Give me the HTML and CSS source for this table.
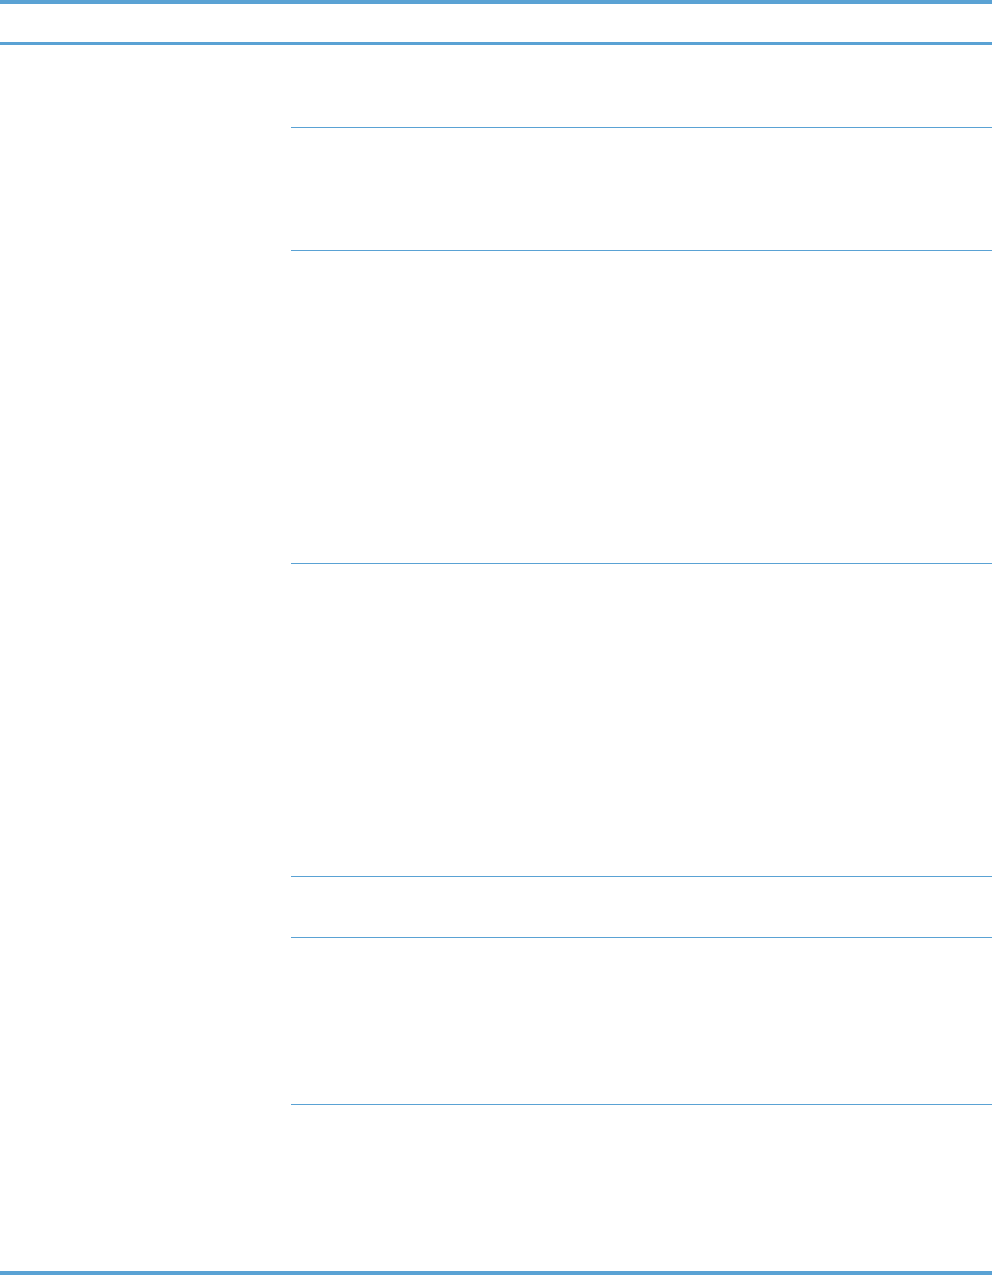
FILE: index.html
```html
<!DOCTYPE html>
<html lang="en">

<head>
  <meta charset="UTF-8">
  <meta name="viewport" content="width=device-width, initial-scale=1.0">
  <title>Table</title>
  <link rel="stylesheet" href="styles.css">
</head>

<body>
  <div class="page">
    <div class="top-rule"></div>
    <div class="table-head"></div>

    <div class="table">
      <div class="row row-1"><div class="label"></div><div class="cell"></div></div>
      <div class="row row-2"><div class="label"></div><div class="cell"></div></div>
      <div class="row row-3"><div class="label"></div><div class="cell"></div></div>
      <div class="row row-4"><div class="label"></div><div class="cell"></div></div>
      <div class="row row-5"><div class="label"></div><div class="cell"></div></div>
      <div class="row row-6"><div class="label"></div><div class="cell"></div></div>
      <div class="row row-7 last"><div class="label"></div><div class="cell"></div></div>
    </div>

    <div class="bottom-rule"></div>
  </div>
</body>

</html>
```

FILE: styles.css
```css
body {
  margin: 0;
  font-family: "Liberation Sans", Arial, sans-serif;
  background: #fff;
}

.page {
  width: 992px;
  height: 1275px;
  display: flex;
  flex-direction: column;
}

.top-rule {
  height: 4px;
  background-color: #5aa2d4;
}

.table-head {
  height: 38px;
  border-bottom: 3px solid #5aa2d4;
}

.table {
  flex: 1;
  display: flex;
  flex-direction: column;
}

.row {
  display: grid;
  grid-template-columns: 291px 1fr;
}

.cell {
  border-bottom: 1px solid #5aa2d4;
}

.row.last .cell {
  border-bottom: none;
}

.row-1 { height: 83px; }
.row-2 { height: 123px; }
.row-3 { height: 313px; }
.row-4 { height: 313px; }
.row-5 { height: 61px; }
.row-6 { height: 167px; }
.row-7 { flex: 1; }

.bottom-rule {
  height: 4px;
  background-color: #5aa2d4;
}
```
